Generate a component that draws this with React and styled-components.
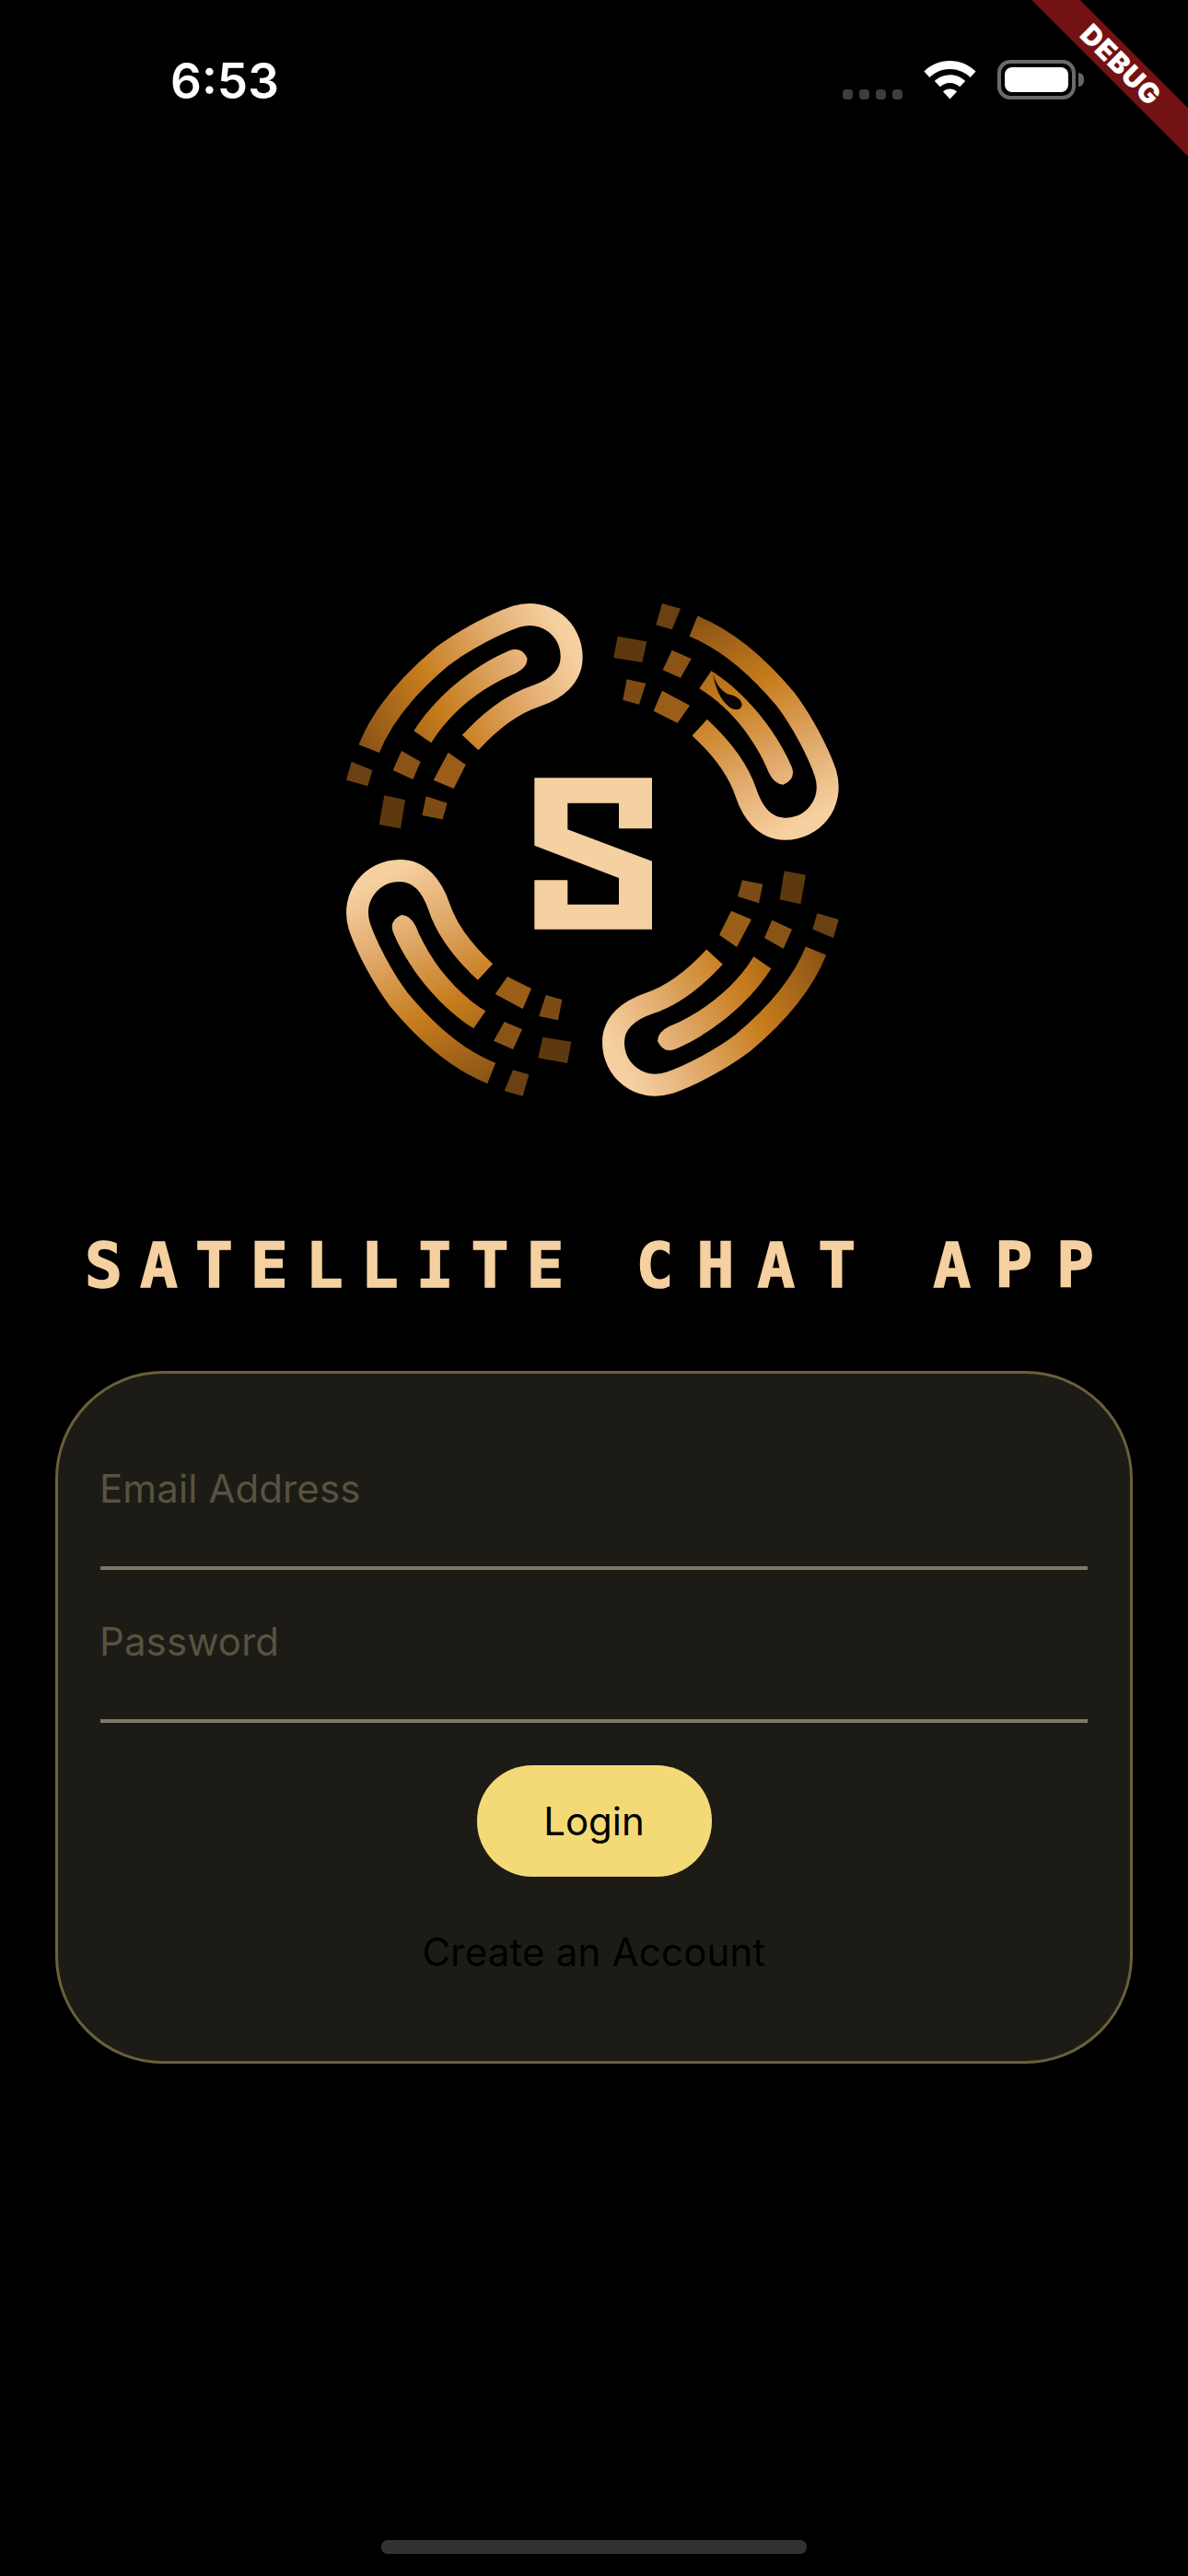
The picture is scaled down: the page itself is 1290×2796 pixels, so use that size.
import React from "react";
import styled, { createGlobalStyle } from "styled-components";

const GlobalStyle = createGlobalStyle`
  html, body {
    margin: 0;
    padding: 0;
    background: #000;
  }
  * {
    box-sizing: border-box;
  }
`;

export default function App() {
  return (
    <>
      <GlobalStyle />
      <Screen>
        <StatusBar>
          <Time>6:53</Time>
          <StatusIcons>
            <SignalDots>
              <Dot />
              <Dot />
              <Dot />
              <Dot />
            </SignalDots>
            <WifiIcon />
            <Battery>
              <BatteryFill />
            </Battery>
          </StatusIcons>
        </StatusBar>

        <LogoWrap>
          <Logo />
        </LogoWrap>

        <Title>
          <Word $spacing={19}>SATELLITE</Word>
          <Word $spacing={25}>CHAT</Word>
          <Word $spacing={26}>APP</Word>
        </Title>

        <Card>
          <Field>
            <Placeholder>Email Address</Placeholder>
          </Field>
          <Field>
            <Placeholder>Password</Placeholder>
          </Field>
          <LoginButton>Login</LoginButton>
          <CreateLink>Create an Account</CreateLink>
        </Card>

        <HomeBar />
        <DebugCorner>
          <DebugRibbon>DEBUG</DebugRibbon>
        </DebugCorner>
      </Screen>
    </>
  );
}

function WifiIcon() {
  return (
    <svg width="57" height="42" viewBox="0 0 57 42">
      <path fill="#fff" d="M28.5 0C17.6 0 7.8 4.3.4 11.600l6 6.400C12 12.300 19.800 8.900 28.500 8.900s16.500 3.400 22.100 9.100l6-6.400C49.200 4.300 39.400 0 28.500 0z" />
      <path fill="#fff" d="M28.500 15.200c-6.500 0-12.400 2.600-16.700 6.800l6 6.300c2.800-2.700 6.600-4.300 10.700-4.300s7.900 1.600 10.700 4.300l6-6.300c-4.300-4.200-10.200-6.800-16.700-6.800z" />
      <path fill="#fff" d="M28.500 30.600c-3 0-5.700 1.200-7.500 3l7.500 8 7.500-8c-1.800-1.800-4.500-3-7.500-3z" />
    </svg>
  );
}

// one arm of the ring, the other three are the same arm turned around the centre
function Arm() {
  return (
    <>
      <path
        d="M182 578C225 470 310 370 420 278C490 225 590 172 660 148C760 118 842 190 842 280C842 345 790 385 725 407C640 435 570 495 512 558"
        fill="none"
        stroke="url(#armGold)"
        strokeWidth="72"
      />
      <path
        d="M328 520C385 428 500 318 640 258Q680 243 698 285Q697 314 660 332C560 372 450 452 385 559Z"
        fill="url(#armGold)"
      />
      <polygon points="125,620 193,648 178,700 108,680" fill="#6b4013" />
      <polygon points="288,585 350,620 325,678 260,648" fill="#8a5416" />
      <polygon points="440,590 497,630 458,708 392,680" fill="#9a5e18" />
      <polygon points="232,730 300,745 285,838 215,825" fill="#5e3910" />
      <polygon points="368,733 437,755 422,808 355,795" fill="#7d4c15" />
    </>
  );
}

function Logo() {
  return (
    <svg width="600" height="600" viewBox="15 0 1800 1800">
      <defs>
        <linearGradient id="armGold" gradientUnits="userSpaceOnUse" x1="115" y1="608" x2="827" y2="230">
          <stop offset="0" stopColor="#74460f" />
          <stop offset="0.1" stopColor="#8f5717" />
          <stop offset="0.42" stopColor="#c77c1c" />
          <stop offset="0.75" stopColor="#e2ac6f" />
          <stop offset="1" stopColor="#f6d0a0" />
        </linearGradient>
      </defs>
      <Arm />
      <g transform="rotate(90 910 907)">
        <Arm />
      </g>
      <g transform="rotate(180 910 907)">
        <Arm />
      </g>
      <g transform="rotate(270 910 907)">
        <Arm />
      </g>
      <path
        d="M1303 332C1310 360 1320 380 1350 400C1375 405 1395 415 1397 435C1395 448 1385 452 1375 450C1355 448 1335 425 1320 395C1312 375 1305 355 1303 332Z"
        fill="#0a0502"
      />
      <polygon
        points="721,673 1104,673 1104,838 996,838 996,755 829,755 829,841 1104,944 1104,1166 721,1166 721,1006 829,1006 829,1085 996,1085 996,999 721,893"
        fill="#f5d0a0"
      />
    </svg>
  );
}

const Screen = styled.div`
  position: relative;
  width: 1290px;
  height: 2796px;
  background: #000;
  overflow: hidden;
  display: flex;
  flex-direction: column;
  align-items: center;
  font-family: Inter, "Noto Sans", sans-serif;
`;

const StatusBar = styled.div`
  width: 100%;
  height: 132px;
  padding: 58px 122px 0 185px;
  display: flex;
  justify-content: space-between;
  align-items: flex-start;
`;

const Time = styled.span`
  color: #fff;
  font-size: 53px;
  font-weight: 600;
  line-height: 60px;
`;

const StatusIcons = styled.div`
  display: flex;
  align-items: flex-end;
  gap: 23px;
  margin-top: 7px;
`;

const SignalDots = styled.div`
  display: flex;
  gap: 7px;
`;

const Dot = styled.div`
  width: 11px;
  height: 11px;
  border-radius: 4px;
  background: #3d3d3d;
`;

const Battery = styled.div`
  position: relative;
  width: 85px;
  height: 43px;
  padding: 4px;
  border: 4px solid #6a6a6a;
  border-radius: 14px;
  &::after {
    content: "";
    position: absolute;
    right: -13px;
    top: 10px;
    width: 6px;
    height: 15px;
    border-radius: 0 8px 8px 0;
    background: #666;
  }
`;

const BatteryFill = styled.div`
  width: 100%;
  height: 100%;
  border-radius: 8px;
  background: #fff;
`;

const LogoWrap = styled.div`
  margin-top: 488px;
  height: 600px;
  filter: blur(0.7px);
`;

const Title = styled.h1`
  margin: 129px 0 0;
  width: 100%;
  padding-left: 92px;
  display: flex;
  gap: 59px;
  height: 50px;
  font-family: "DejaVu Sans Mono", monospace;
  font-size: 68px;
  font-weight: 700;
  line-height: 50px;
  color: #f5d0a0;
  -webkit-text-stroke: 1.5px #f5d0a0;
`;

const Word = styled.span`
  letter-spacing: ${(p) => p.$spacing}px;
`;

const Card = styled.div`
  width: 1170px;
  height: 752px;
  margin-top: 89px;
  padding: 47px 46px 0;
  background: #1c1b16;
  border: 3px solid #6b5f3c;
  border-radius: 117px;
  display: flex;
  flex-direction: column;
  align-items: center;
`;

const Field = styled.div`
  width: 100%;
  height: 166px;
  padding-top: 50px;
  border-bottom: 4px solid #7d7966;
`;

const Placeholder = styled.span`
  display: block;
  margin-left: -1px;
  font-size: 42px;
  line-height: 56px;
  letter-spacing: 0.1px;
  color: #57533f;
`;

const LoginButton = styled.button`
  width: 255px;
  height: 121px;
  margin-top: 46px;
  border: none;
  border-radius: 60px;
  background: #f4da76;
  color: #000;
  font-family: inherit;
  font-size: 42px;
`;

const CreateLink = styled.span`
  margin-top: 54px;
  font-size: 42px;
  line-height: 56px;
  letter-spacing: 0.2px;
  color: #000;
`;

const HomeBar = styled.div`
  position: absolute;
  left: 414px;
  top: 2757px;
  width: 462px;
  height: 15px;
  border-radius: 7px;
  background: #323232;
`;

const DebugCorner = styled.div`
  position: absolute;
  top: 0;
  right: 0;
  width: 200px;
  height: 200px;
  overflow: hidden;
`;

const DebugRibbon = styled.div`
  position: absolute;
  left: -23px;
  top: 52px;
  width: 300px;
  height: 37px;
  background: #731212;
  color: #fff;
  font-size: 30px;
  font-weight: 900;
  line-height: 37px;
  letter-spacing: 1px;
  text-align: center;
  transform: rotate(45deg);
`;
